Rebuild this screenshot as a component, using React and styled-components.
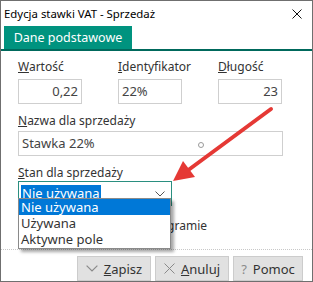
import styled, { createGlobalStyle } from 'styled-components';

const GlobalStyle = createGlobalStyle`
  html, body {
    margin: 0;
    padding: 0;
    background: #ffffff;
  }
  body {
    font-family: 'Noto Sans', 'Open Sans', sans-serif;
  }
`;

const Window = styled.div`
  position: relative;
  width: 313px;
  height: 282px;
  box-sizing: border-box;
  border: 1px solid #6f6f6f;
  background: #ffffff;
  overflow: hidden;
`;
const TitleBar = styled.div`
  display: flex;
  align-items: center;
  justify-content: space-between;
  height: 25px;
  padding: 0 10px 0 3px;
  font-size: 11.4px;
  color: #000000;
`;
const TabStrip = styled.div`
  display: flex;
  padding-left: 3px;
  border-bottom: 2px solid #00695c;
`;
const Tab = styled.div`
  width: 128px;
  height: 23px;
  line-height: 23px;
  background: #00937f;
  color: #ffffff;
  font-size: 12.5px;
  text-align: center;
  box-sizing: border-box;
`;
const Body = styled.div`
  padding: 8px 29px 0 17px;
`;
const FieldGrid = styled.div`
  display: grid;
  grid-template-columns: 64px 64px 64px;
  column-gap: 36px;
`;
const Field = styled.div`
  display: flex;
  flex-direction: column;
  margin-top: ${(p) => p.$mt || 0}px;
`;
const Label = styled.div`
  font-size: 12px;
  color: #333333;
  height: 16px;
  line-height: 16px;
  margin-bottom: ${(p) => p.$gap || 0}px;
`;
const Input = styled.div`
  height: 25px;
  box-sizing: border-box;
  border: 1px solid #cfcfcf;
  font-size: 13px;
  color: #444444;
  line-height: 23px;
  padding: 0 3px;
  text-align: ${(p) => (p.$right ? 'right' : 'left')};
  position: relative;
`;
const Dot = styled.span`
  position: absolute;
  left: 179px;
  top: 10px;
  width: 4px;
  height: 4px;
  border: 1px solid #9a9a9a;
  border-radius: 50%;
`;
const Select = styled.div`
  width: 154px;
  height: 25px;
  box-sizing: border-box;
  border: 1px solid #2a8f80;
  display: flex;
  align-items: center;
  justify-content: space-between;
  padding: 0 6px 0 2px;
  font-size: 13px;
`;
const Selected = styled.span`
  background: #0078d7;
  color: #ffffff;
  padding: 0 1px;
  line-height: 17px;
`;
const CheckRow = styled.div`
  display: flex;
  align-items: center;
  gap: 6px;
  margin-top: 11px;
  height: 16px;
  font-size: 12px;
  color: #333333;
`;
const Check = styled.span`
  width: 12px;
  height: 12px;
  box-sizing: border-box;
  border: 1px solid #333333;
`;
const Separator = styled.div`
  margin-top: 16px;
  border-top: 1px dotted #c8c8c8;
`;
const ButtonRow = styled.div`
  display: flex;
  justify-content: flex-end;
  gap: 4px;
  padding: 6px 9px 0 0;
`;
const Button = styled.div`
  width: ${(p) => p.$width}px;
  height: 25px;
  box-sizing: border-box;
  background: #e1e1e1;
  border: 1px solid #cccccc;
  display: flex;
  align-items: center;
  justify-content: center;
  gap: 6px;
  font-size: 13px;
  color: #333333;
`;
const HelpGlyph = styled.span`
  color: #8a8a8a;
  font-size: 13px;
`;
const DropList = styled.div`
  position: absolute;
  left: 17px;
  top: 197px;
  width: 153px;
  box-sizing: border-box;
  border: 1px solid #8a8a8a;
  background: #ffffff;
  box-shadow: 3px 3px 3px rgba(0, 0, 0, 0.35);
  padding-bottom: 1px;
`;
const Option = styled.div`
  height: 16px;
  line-height: 16px;
  font-size: 13px;
  padding-left: 2px;
  background: ${(p) => (p.$active ? '#0078d7' : '#ffffff')};
  color: ${(p) => (p.$active ? '#ffffff' : '#333333')};
`;
const Arrow = styled.svg`
  position: absolute;
  left: 0;
  top: 0;
  pointer-events: none;
`;

function ChevronDown({ color = '#555555', size = 10 }) {
  return (
    <svg width={size} height={size * 0.6} viewBox="0 0 10 6">
      <path d="M0.5 0.5 L5 5 L9.5 0.5" fill="none" stroke={color} strokeWidth="1" />
    </svg>
  );
}

export default function App() {
  return (
    <>
      <GlobalStyle />
      <Window>
        <TitleBar>
          <span>Edycja stawki VAT - Sprzedaż</span>
          <svg width="10" height="10" viewBox="0 0 10 10">
            <path d="M0.5 0.5 L9.5 9.5 M9.5 0.5 L0.5 9.5" stroke="#111111" strokeWidth="1" />
          </svg>
        </TitleBar>
        <TabStrip>
          <Tab>Dane podstawowe</Tab>
        </TabStrip>
        <Body>
          <FieldGrid>
            <Field>
              <Label $gap={4}><u>W</u>artość</Label>
              <Input $right>0,22</Input>
            </Field>
            <Field>
              <Label $gap={4}><u>I</u>dentyfikator</Label>
              <Input>22%</Input>
            </Field>
            <Field>
              <Label $gap={4}><u>D</u>ługość</Label>
              <Input $right>23</Input>
            </Field>
          </FieldGrid>
          <Field $mt={9}>
            <Label $gap={2}><u>N</u>azwa dla sprzedaży</Label>
            <Input>
              Stawka 22%
              <Dot />
            </Input>
          </Field>
          <Field $mt={9}>
            <Label><u>S</u>tan dla sprzedaży</Label>
            <Select>
              <Selected>Nie używana</Selected>
              <ChevronDown />
            </Select>
          </Field>
          <CheckRow>
            <Check />
            <span>Stawka widoczna w programie</span>
          </CheckRow>
        </Body>
        <Separator />
        <ButtonRow>
          <Button $width={74}>
            <ChevronDown color="#8a8a8a" size={12} />
            <span><u>Z</u>apisz</span>
          </Button>
          <Button $width={74}>
            <svg width="11" height="11" viewBox="0 0 11 11">
              <path d="M0.5 0.5 L10.5 10.5 M10.5 0.5 L0.5 10.5" stroke="#8a8a8a" strokeWidth="1" />
            </svg>
            <span><u>A</u>nuluj</span>
          </Button>
          <Button $width={70}>
            <HelpGlyph>?</HelpGlyph>
            <span>Pomoc</span>
          </Button>
        </ButtonRow>
        <DropList>
          <Option $active>Nie używana</Option>
          <Option>Używana</Option>
          <Option>Aktywne pole</Option>
        </DropList>
        <Arrow width="313" height="282" viewBox="0 0 313 282">
          <path d="M270 108 L186 170" stroke="#e53935" strokeWidth="4" strokeLinecap="round" />
          <path d="M172 180 L182 160 L194 176 Z" fill="#e53935" />
        </Arrow>
      </Window>
    </>
  );
}
